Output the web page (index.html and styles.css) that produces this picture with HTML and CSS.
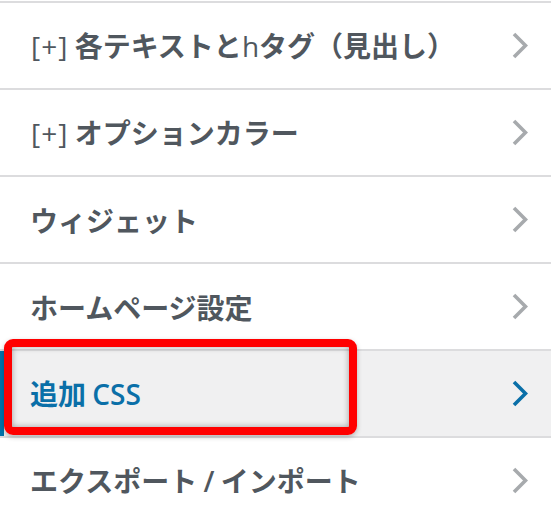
FILE: index.html
```html
<!DOCTYPE html>
<html lang="ja">
<head>
    <meta charset="UTF-8">
    <meta name="viewport" content="width=device-width, initial-scale=1.0">
    <title>カスタマイズ</title>
    <link rel="stylesheet" href="styles.css">
</head>
<body>
    <ul class="sections">
        <li class="section">
            <h3 class="section-title"><span class="latin bracket">[+]</span> 各テキストと<span class="latin">h</span>タグ（見出し）</h3>
            <svg class="chevron" viewBox="0 0 16 27" width="16" height="27"><polyline points="2,2 13.5,13.5 2,25"/></svg>
        </li>
        <li class="section">
            <h3 class="section-title"><span class="latin bracket">[+]</span> オプションカラー</h3>
            <svg class="chevron" viewBox="0 0 16 27" width="16" height="27"><polyline points="2,2 13.5,13.5 2,25"/></svg>
        </li>
        <li class="section">
            <h3 class="section-title">ウィジェット</h3>
            <svg class="chevron" viewBox="0 0 16 27" width="16" height="27"><polyline points="2,2 13.5,13.5 2,25"/></svg>
        </li>
        <li class="section">
            <h3 class="section-title">ホームページ設定</h3>
            <svg class="chevron" viewBox="0 0 16 27" width="16" height="27"><polyline points="2,2 13.5,13.5 2,25"/></svg>
        </li>
        <li class="section current">
            <span class="highlight"></span>
            <h3 class="section-title">追加 <span class="latin semi">CSS</span></h3>
            <svg class="chevron" viewBox="0 0 16 27" width="16" height="27"><polyline points="2,2 13.5,13.5 2,25"/></svg>
        </li>
        <li class="section">
            <h3 class="section-title">エクスポート <span class="latin semi">/</span> インポート</h3>
            <svg class="chevron" viewBox="0 0 16 27" width="16" height="27"><polyline points="2,2 13.5,13.5 2,25"/></svg>
        </li>
    </ul>
</body>
</html>
```

FILE: styles.css
```css
body {
    margin: 0;
    padding: 0;
    background-color: #fff;
    font-family: "Noto Sans CJK JP", "Open Sans", sans-serif;
}
.sections {
    list-style: none;
    margin: 0;
    padding: 1px 0 0 0;
}
.section {
    position: relative;
    display: flex;
    align-items: center;
    justify-content: space-between;
    height: 85px;
    padding: 0 23px 0 30px;
    border-top: 2px solid #dcdcde;
    color: #50575e;
}
.section-title {
    margin: 0;
    font-size: 28px;
    font-weight: 700;
    line-height: 1;
    white-space: nowrap;
}
.latin {
    font-family: "Open Sans", sans-serif;
    font-weight: 400;
}
.bracket {
    letter-spacing: 1px;
    margin-left: 1px;
}
.semi {
    font-weight: 600;
}
.chevron {
    fill: none;
    stroke: #a7aaad;
    stroke-width: 3.6;
}
.section.current {
    background-color: #f0f0f1;
    color: #0a6fa8;
    box-shadow: inset 4px 0 0 #0073aa;
    border-bottom: 2px solid #dcdcde;
}
.section.current + .section {
    border-top: none;
}
.section.current .chevron {
    stroke: #0a6fa8;
}
.highlight {
    position: absolute;
    top: -12px;
    left: 4px;
    width: 353px;
    height: 96px;
    box-sizing: border-box;
    border: 8px solid #ff0000;
    border-radius: 9px;
    box-shadow: 0 2px 5px rgba(0, 0, 0, 0.25), inset 0 0 6px rgba(0, 0, 0, 0.35);
}
```
